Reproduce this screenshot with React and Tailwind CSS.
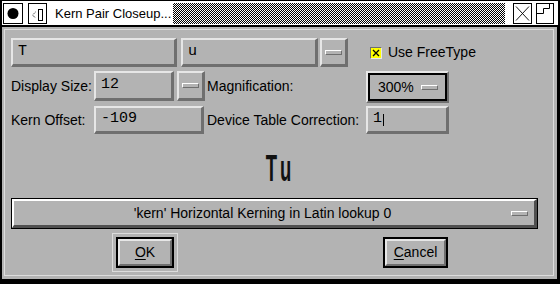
import React from "react"

const raised =
  "border-t-2 border-l-2 border-b-[3px] border-r-[3px] border-t-[#e6e6e6] border-l-[#e6e6e6] border-b-[#6f6f6f] border-r-[#6f6f6f]"
const bevel2 =
  "border-2 border-t-[#e6e6e6] border-l-[#e6e6e6] border-b-[#6f6f6f] border-r-[#6f6f6f]"
const mono = "font-['Liberation_Mono','Courier_New',monospace]"

function Indicator() {
  return (
    <div className="w-[17px] h-[5px] border border-t-white border-l-white border-b-[#6f6f6f] border-r-[#6f6f6f] bg-[#b3b3b3]" />
  )
}

function Field({ className, children }) {
  return (
    <div className={`${raised} ${className} h-full flex items-center pl-[5px] ${mono} text-[15px]`}>
      {children}
    </div>
  )
}

function MenuButton() {
  return (
    <div className={`${raised} w-[28px] h-full flex items-center justify-center`}>
      <Indicator />
    </div>
  )
}

export default function App() {
  return (
    <div className="w-[560px] h-[284px] bg-black px-[2px] pt-[1px] overflow-hidden font-['Liberation_Sans',Arial,sans-serif] text-black">
      {/* title bar */}
      <div className="h-[24px] bg-white flex items-start pt-[2px]">
        <svg width="20" height="21" className="ml-[1px] shrink-0">
          <rect x="0.5" y="0.5" width="19" height="20" fill="white" stroke="black" />
          <circle cx="10" cy="10.5" r="5.5" fill="black" />
        </svg>
        <svg width="19" height="21" className="ml-[5px] shrink-0">
          <rect x="0.5" y="0.5" width="18" height="20" fill="white" stroke="black" />
          <path d="M7.5 9 L4.5 12 L7.5 15" fill="none" stroke="black" strokeDasharray="1 1" />
          <rect x="10.5" y="6.5" width="4" height="11" fill="none" stroke="black" />
        </svg>
        <div className="ml-[8px] w-[118px] h-[21px] text-[13px] leading-[21px] whitespace-nowrap">
          Kern Pair Closeup...
        </div>
        <div className="flex-1 h-[21px] bg-[repeating-conic-gradient(#000_0_25%,#fff_0_50%)] bg-[length:2px_2px]" />
        <svg width="19" height="21" className="ml-[8px] shrink-0">
          <rect x="0.5" y="0.5" width="18" height="20" fill="white" stroke="black" />
          <path d="M3 3.5 L16 17.5 M16 3.5 L3 17.5" stroke="black" strokeWidth="0.9" />
        </svg>
        <svg width="18" height="21" className="ml-[4px] shrink-0">
          <rect x="0.5" y="0.5" width="17" height="20" fill="white" stroke="black" />
          <path d="M13.5 1 V5.5 H7.5 V10.5 H1" fill="none" stroke="black" />
        </svg>
        <div className="w-[4px]" />
      </div>

      {/* body */}
      <div className="mt-[2px] mr-[1px] h-[252px] bg-[#b3b3b3] pt-[2px] pl-[2px] pr-[3px] pb-[3px]">
        <div className="h-full border border-[#dcdcdc] pt-[8px] text-[14px]">
          {/* row 1 */}
          <div className="flex items-center h-[29px] pl-[6px]">
            <Field className="w-[166px]">T</Field>
            <Field className="w-[137px] ml-[4px]">u</Field>
            <div className="ml-[2px] h-full flex">
              <MenuButton />
            </div>
            <div className="ml-[22px] w-[12px] h-[12px] border border-t-[#6f6f6f] border-l-[#6f6f6f] border-b-[#e6e6e6] border-r-[#e6e6e6] bg-[#ffff00]">
              <svg viewBox="0 0 10 10" className="w-full h-full block">
                <path d="M2 2 L8 8 M8 2 L2 8" stroke="black" strokeWidth="1.3" />
              </svg>
            </div>
            <span className="ml-[6px]">Use FreeType</span>
          </div>

          {/* row 2 */}
          <div className="flex items-start h-[30px] mt-[4px] pl-[6px]">
            <div className="w-[83px] h-full flex items-center">Display Size:</div>
            <Field className="w-[80px]">12</Field>
            <div className="ml-[3px] h-full flex">
              <MenuButton />
            </div>
            <div className="ml-[2px] w-[159px] h-full flex items-center">Magnification:</div>
            <div className={`${bevel2} w-[83px] h-[32px] shrink-0`}>
              <div className="h-full border-2 border-black flex items-center pl-[8px]">
                <span>300%</span>
                <div className="ml-[7px]">
                  <Indicator />
                </div>
              </div>
            </div>
          </div>

          {/* row 3 */}
          <div className="flex items-start h-[28px] mt-[5px] pl-[6px]">
            <div className="w-[83px] h-full flex items-center">Kern Offset:</div>
            <Field className="w-[110px]">-109</Field>
            <div className="ml-[3px] w-[159px] h-full flex items-center">Device Table Correction:</div>
            <Field className="w-[83px]">
              1<span className="inline-block w-px h-[12px] bg-black ml-[1px]" />
            </Field>
          </div>

          {/* glyph preview */}
          <div className="flex justify-center h-[27px] mt-[21px]">
            <div className="flex scale-x-50 font-bold text-[37px] leading-[27px] text-[#111]">
              <span>T</span>
              <span className="ml-[6px]">u</span>
            </div>
          </div>

          {/* lookup selector */}
          <div className="mt-[16px] ml-[6px] w-[527px] h-[31px] border border-black">
            <div className="h-full flex items-center border-t-2 border-l-2 border-b-[3px] border-r-[3px] border-t-white border-l-white border-b-[#505050] border-r-[#505050]">
              <div className="flex-1 text-center whitespace-nowrap">
                'kern' Horizontal Kerning in Latin lookup 0
              </div>
              <Indicator />
              <div className="w-[6px]" />
            </div>
          </div>

          {/* buttons */}
          <div className="flex items-start h-[39px] mt-[4px] pl-[107px]">
            <div className="w-[66px] h-[39px] border border-[#dcdcdc] p-[3px]">
              <div className="h-[31px] border-2 border-black">
                <div className={`${bevel2} h-full flex items-center justify-center`}>
                  <span>
                    <span className="underline underline-offset-2">O</span>K
                  </span>
                </div>
              </div>
            </div>
            <div className="ml-[205px] mt-[4px] w-[65px] h-[31px] border-2 border-black">
              <div className={`${bevel2} h-full flex items-center justify-center`}>
                <span>
                  <span className="underline underline-offset-2">C</span>ancel
                </span>
              </div>
            </div>
          </div>
        </div>
      </div>
    </div>
  )
}
